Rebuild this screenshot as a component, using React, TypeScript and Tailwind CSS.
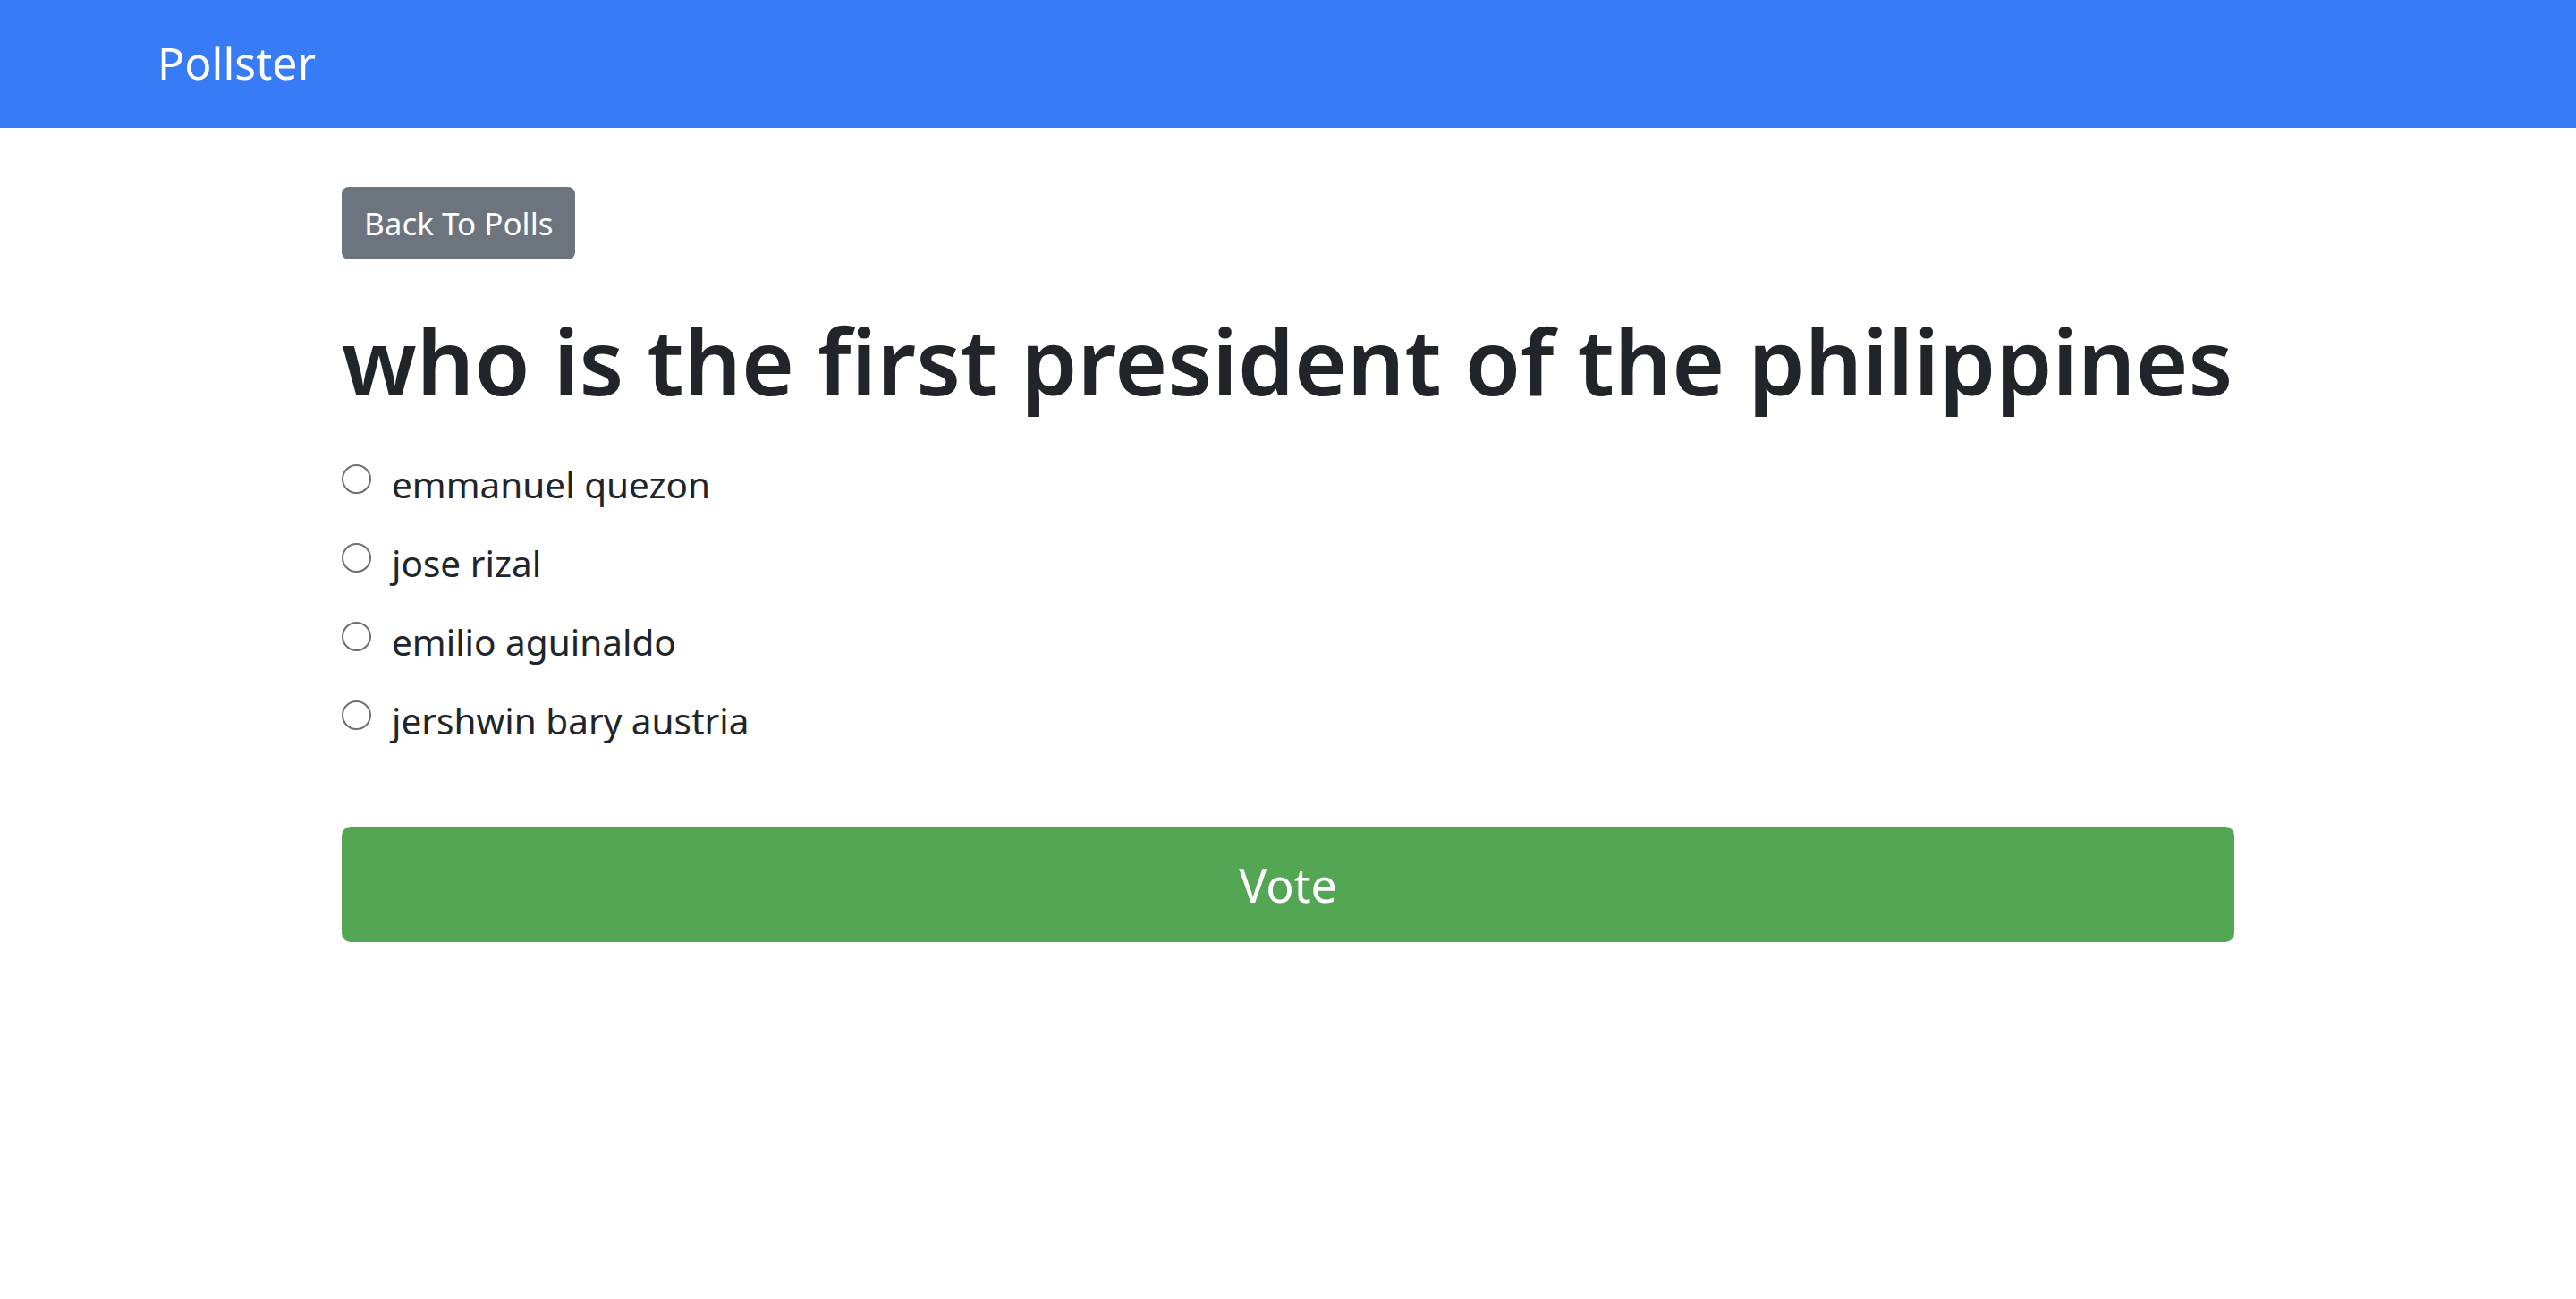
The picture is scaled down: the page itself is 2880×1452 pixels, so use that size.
import React from "react";

const options = ["emmanuel quezon", "jose rizal", "emilio aguinaldo", "jershwin bary austria"];

export default function App() {
  return (
    <div className="min-h-[1452px] bg-white text-[#212529]" style={{ fontFamily: '"Noto Sans", "Open Sans", sans-serif' }}>
      <nav className="h-[143px] bg-[#377bf6] flex items-center pl-[176px]">
        <span className="text-white text-[50px] leading-none -translate-y-[2px]">Pollster</span>
      </nav>
      <main className="ml-[382px] w-[2116px] pt-[66px]">
        <button className="h-[81px] px-[25px] rounded-[8px] bg-[#6c757d] text-white text-[35px] leading-none">
          Back To Polls
        </button>
        <h1 className="mt-[53px] text-[101px] font-semibold leading-[1.2]">who is the first president of the philippines</h1>
        <div className="mt-[34px] flex flex-col">
          {options.map((o) => (
            <label key={o} className="h-[88px] flex items-center gap-[23px] text-[40.5px]">
              <span className="w-[33px] h-[33px] rounded-full border-2 border-[#6f6f6f] bg-white -translate-y-[7px]" />
              <span>{o}</span>
            </label>
          ))}
        </div>
        <button className="mt-[74px] w-full h-[129px] rounded-[10px] bg-[#53a653] text-white text-[52px]">Vote</button>
      </main>
    </div>
  );
}
